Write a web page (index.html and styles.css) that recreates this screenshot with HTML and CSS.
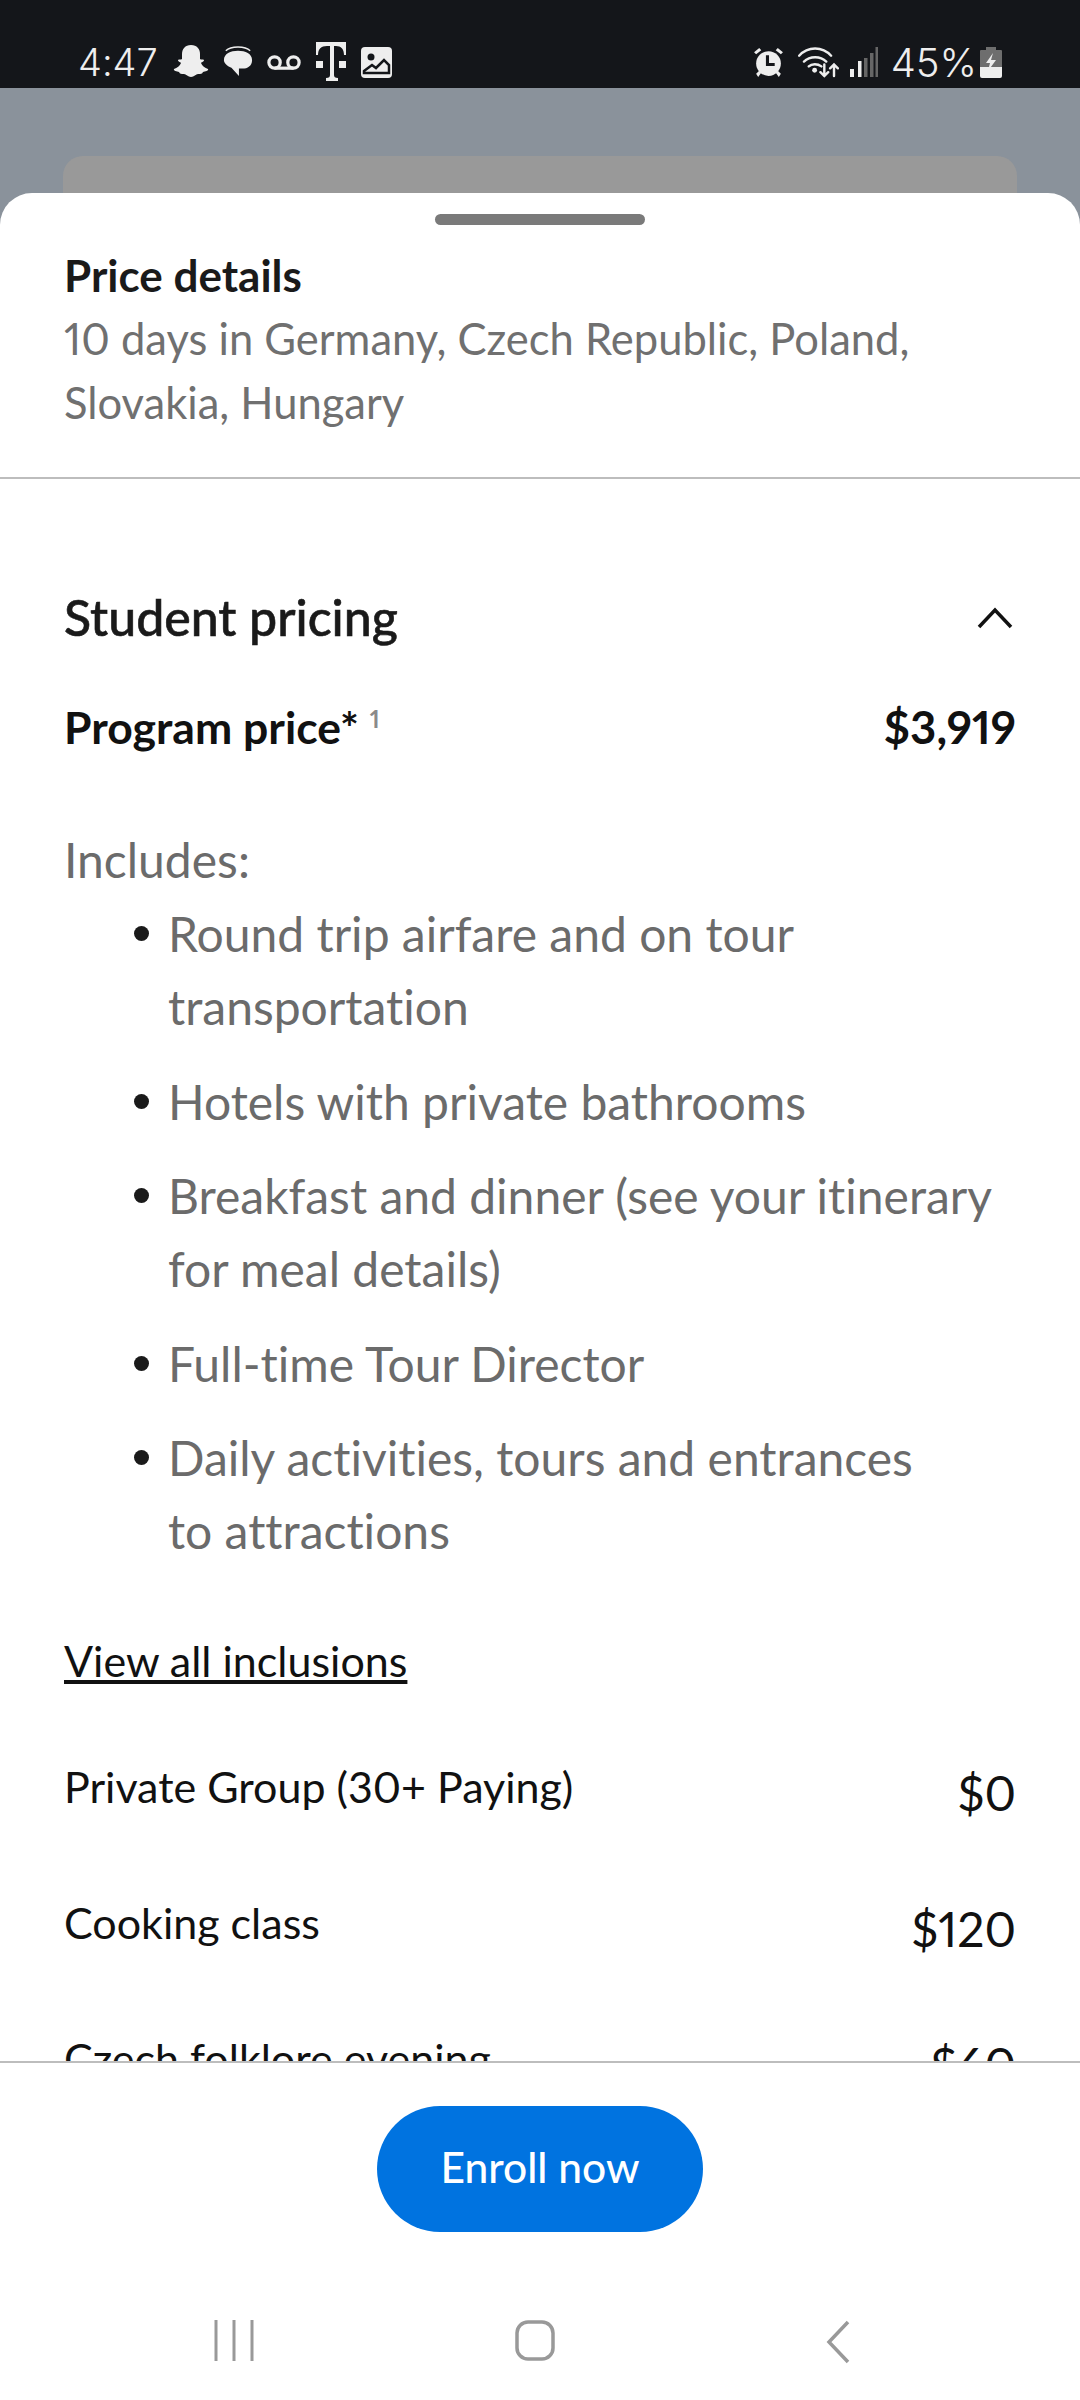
FILE: index.html
```html
<!DOCTYPE html>
<html lang="en">
  <head>
    <meta charset="UTF-8" />
    <meta name="viewport" content="width=device-width, initial-scale=1.0" />
    <title>Price details</title>
    <link rel="stylesheet" href="styles.css">
  </head>
  <body>
    <div class="page">
      <div class="status-bar">
        <div class="status-left">
          <span class="clock">4:47</span>
          <svg class="ic" width="36" height="36" viewBox="0 0 36 36"><path fill="#eee" d="M18 1c6 0 9 4 9 9v5c1 1 3 0 4 1 0 2-3 2-3 3 1 3 4 5 7 6 1 2-3 2-5 3-1 2-2 2-5 2-2 0-4 3-7 3s-5-3-7-3c-3 0-4 0-5-2-2-1-6-1-5-3 3-1 6-3 7-6 0-1-3-1-3-3 1-1 3 0 4-1v-5c0-5 3-9 9-9z"/></svg>
          <svg class="ic" width="30" height="32" viewBox="0 0 32 34"><path fill="#eee" d="M16 5c8 0 15 3 15 10 0 6-5 9-10 9h-4v8l-8-9C4 21 1 18 1 15 1 8 8 5 16 5z"/><path fill="none" stroke="#eee" stroke-width="1.500" d="M3 5c3-3 8-4 13-4s10 1 13 4"/></svg>
          <svg class="ic" width="34" height="17" viewBox="0 0 36 18"><g fill="none" stroke="#eee" stroke-width="3.400"><circle cx="8" cy="9" r="6"/><circle cx="28" cy="9" r="6"/><path d="M8 15h20"/></g></svg>
          <svg class="ic" width="32" height="40" viewBox="0 0 32 40"><path fill="#eee" d="M1 0h30v13h-2c0-6-3-9-8-9h-2v29c0 2 1 3 4 3v3H11v-3c3 0 4-1 4-3V4h-3C6 4 3 7 3 13H1zM1 19h7v7H1zM24 19h7v7h-7z"/></svg>
          <svg class="ic" width="31" height="31" viewBox="0 0 31 31"><rect width="31" height="31" rx="4" fill="#eee"/><circle cx="10" cy="10" r="3.500" fill="#14161a"/><path fill="none" stroke="#14161a" stroke-width="2.500" d="M3 24l8-6 4 3 8-8 5 5v8H3z"/></svg>
        </div>
        <div class="status-right">
          <svg class="ic" width="33" height="33" viewBox="0 0 32 32"><g fill="#eee"><circle cx="16" cy="17" r="12"/><path d="M2 6l5-4 2 2-5 4zM30 6l-5-4-2 2 5 4zM4 27l3-3 2 2-3 4zM28 27l-3-3-2 2 3 4z"/></g><path fill="none" stroke="#14161a" stroke-width="3" d="M15 9v9h7"/></svg>
          <svg class="ic wifi" width="41" height="31" viewBox="0 0 42 32"><g fill="none" stroke="#eee" stroke-width="2.500" stroke-linecap="round"><path d="M1 9c9-10 24-10 33 0M6 15c6-6 17-6 23 0M11 20c3-3 9-3 13 0"/><path d="M27 18v12M23 26l4 4 4-4M37 30V18M33 22l4-4 4 4"/></g><circle cx="17" cy="24" r="2.500" fill="#eee"/></svg>
          <svg class="ic signal" width="28" height="30" viewBox="0 0 28 30"><rect x="0" y="22" width="4" height="8" fill="#eee"/><rect x="8" y="14" width="3.500" height="16" fill="#eee"/><rect x="14" y="11" width="3.500" height="19" fill="#666"/><rect x="20" y="6" width="3.500" height="24" fill="#666"/><rect x="25.500" y="0" width="2.500" height="30" fill="#666"/></svg>
          <span class="battery-text">45%</span>
          <svg class="ic" width="22" height="31" viewBox="0 0 22 31"><path fill="#6e6e6e" d="M6 0h10v3h5a1 1 0 0 1 1 1v16H0V4a1 1 0 0 1 1-1h5z"/><path fill="#eee" d="M0 20h22v9a2 2 0 0 1-2 2H2a2 2 0 0 1-2-2z"/><path fill="#eee" d="M13 6l-7 10h4l-2 8 8-11h-5z"/></svg>
        </div>
      </div>

      <div class="backdrop">
        <div class="backdrop-card"></div>
      </div>

      <div class="sheet">
        <div class="handle"></div>
        <div class="sheet-head">
          <h1>Price details</h1>
          <p>10 days in Germany, Czech Republic, Poland, Slovakia, Hungary</p>
        </div>
        <div class="sheet-body">
          <div class="section-title">
            <h2>Student pricing</h2>
            <svg width="36" height="22" viewBox="0 0 36 22"><path fill="none" stroke="#111" stroke-width="3.500" d="M2 20L18 3l16 17"/></svg>
          </div>
          <div class="program-row">
            <span>Program price* <sup>1</sup></span>
            <span class="program-price">$3,919</span>
          </div>
          <div class="includes">
            <p>Includes:</p>
            <ul>
              <li>Round trip airfare and on tour<br>transportation</li>
              <li>Hotels with private bathrooms</li>
              <li>Breakfast and dinner (see your itinerary<br>for meal details)</li>
              <li>Full-time Tour Director</li>
              <li>Daily activities, tours and entrances<br>to attractions</li>
            </ul>
          </div>
          <a class="view-all" href="#">View all inclusions</a>
          <div class="addon-row"><span>Private Group (30+ Paying)</span><span class="addon-price">$0</span></div>
          <div class="addon-row"><span>Cooking class</span><span class="addon-price">$120</span></div>
          <div class="addon-row"><span>Czech folklore evening</span><span class="addon-price">$60</span></div>
        </div>
        <div class="sheet-foot">
          <button class="enroll">Enroll now</button>
        </div>
        <div class="nav-bar">
          <svg width="40" height="41" viewBox="0 0 40 41"><path fill="none" stroke="#999" stroke-width="3" d="M2 0v41M20 0v41M38 0v41"/></svg>
          <svg width="40" height="41" viewBox="0 0 40 41"><rect x="2" y="2" width="36" height="37" rx="11" fill="none" stroke="#999" stroke-width="3.500"/></svg>
          <svg class="nav-back" width="24" height="44" viewBox="0 0 24 44"><path fill="none" stroke="#999" stroke-width="3.500" d="M22 2L3 22l19 20"/></svg>
        </div>
      </div>
    </div>
  </body>
</html>
```

FILE: styles.css
```css
* {
  box-sizing: border-box;
}
body {
  margin: 0;
  font-family: "Lato", "Noto Sans", sans-serif;
  font-variant-ligatures: none;
  font-variant-numeric: proportional-nums;
  color: #111;
}
h1,
h2,
p,
ul {
  margin: 0;
  padding: 0;
}
.page {
  width: 1080px;
  height: 2400px;
  display: flex;
  flex-direction: column;
  background: #8a929b;
  overflow: hidden;
}

/* status bar */
.status-bar {
  height: 88px;
  flex: none;
  background: #14161a;
  color: #eee;
  display: flex;
  justify-content: space-between;
  align-items: flex-end;
  padding: 0 78px 4px 78px;
}
.status-left,
.status-right {
  display: flex;
  align-items: center;
  height: 44px;
}
.status-left {
  gap: 14px;
}
.status-right {
  gap: 8px;
}
.clock,
.battery-text {
  font-family: "Inter", sans-serif;
  font-weight: 300;
}
.clock {
  font-size: 38px;
  margin-right: 1px;
}
.battery-text {
  font-size: 40px;
  margin: 0 -5px 0 5px;
}
.wifi {
  margin-left: 5px;
}
.signal {
  margin-left: 3px;
}
.ic {
  flex: none;
}

/* dimmed page behind the sheet */
.backdrop {
  height: 105px;
  flex: none;
  padding: 68px 63px 0;
}
.backdrop-card {
  height: 37px;
  background: #999;
  border-radius: 20px 20px 0 0;
}

/* sheet */
.sheet {
  flex: 1;
  min-height: 0;
  background: #fff;
  border-radius: 32px 32px 0 0;
  display: flex;
  flex-direction: column;
}
.handle {
  width: 210px;
  height: 11px;
  flex: none;
  margin: 21px auto 0;
  background: #7a7a7a;
  border-radius: 6px;
}
.sheet-head {
  flex: none;
  padding: 26px 64px 43px;
  border-bottom: 2px solid #bdbdbd;
}
.sheet-head h1 {
  font-size: 44px;
  font-weight: 700;
  line-height: 48px;
  color: #1a1a1a;
}
.sheet-head p {
  font-size: 43.500px;
  line-height: 64px;
  color: #707070;
  margin-top: 7px;
}
.sheet-body {
  flex: 1;
  min-height: 0;
  overflow: hidden;
  padding: 106px 64px 0;
}
.section-title {
  display: flex;
  justify-content: space-between;
  align-items: center;
  padding-right: 3px;
}
.section-title svg {
  position: relative;
  top: 1px;
}
.section-title h2 {
  font-size: 50px;
  font-weight: 500;
  line-height: 64px;
  color: #1a1a1a;
  -webkit-text-stroke: 0.6px #1a1a1a;
}
.program-row {
  display: flex;
  justify-content: space-between;
  margin-top: 46px;
  font-size: 44.500px;
  font-weight: 700;
  line-height: 64px;
}
.program-price {
  font-size: 45.500px;
}
.program-row sup {
  font-size: 24px;
  font-weight: 700;
  color: #8a8a8a;
  line-height: 0;
}
.includes {
  margin-top: 64px;
  color: #6b6b6b;
  font-size: 48px;
  line-height: 73px;
}
.includes ul {
  list-style: none;
  margin-top: 1px;
}
.includes li {
  position: relative;
  padding-left: 104px;
  margin-bottom: 21.500px;
}
.includes li::before {
  content: "";
  position: absolute;
  left: 70px;
  top: 29px;
  width: 15px;
  height: 15px;
  border-radius: 50%;
  background: #1a1a1a;
}
.view-all {
  display: block;
  margin-top: 62px;
  font-size: 43px;
  line-height: 64px;
  color: #111;
}
.addon-row {
  display: flex;
  justify-content: space-between;
  align-items: flex-end;
  margin-top: 62px;
  font-size: 43px;
  line-height: 64px;
}
.addon-row + .addon-row {
  margin-top: 72px;
}
.addon-price {
  font-size: 48px;
  position: relative;
  top: 6px;
}
.sheet-foot {
  flex: none;
  height: 206px;
  padding-top: 43px;
  border-top: 2px solid #bdbdbd;
  text-align: center;
  background: #fff;
}
.enroll {
  width: 326px;
  height: 126px;
  padding: 0 0 5px;
  border: 0;
  border-radius: 63px;
  background: #0073e0;
  color: #fff;
  font-family: inherit;
  font-size: 42.500px;
  font-weight: 500;
}
.nav-bar {
  flex: none;
  height: 133px;
  display: flex;
  align-items: flex-start;
  gap: 261px;
  padding: 53px 0 0 214px;
}
.nav-back {
  margin-left: 10px;
}
```
